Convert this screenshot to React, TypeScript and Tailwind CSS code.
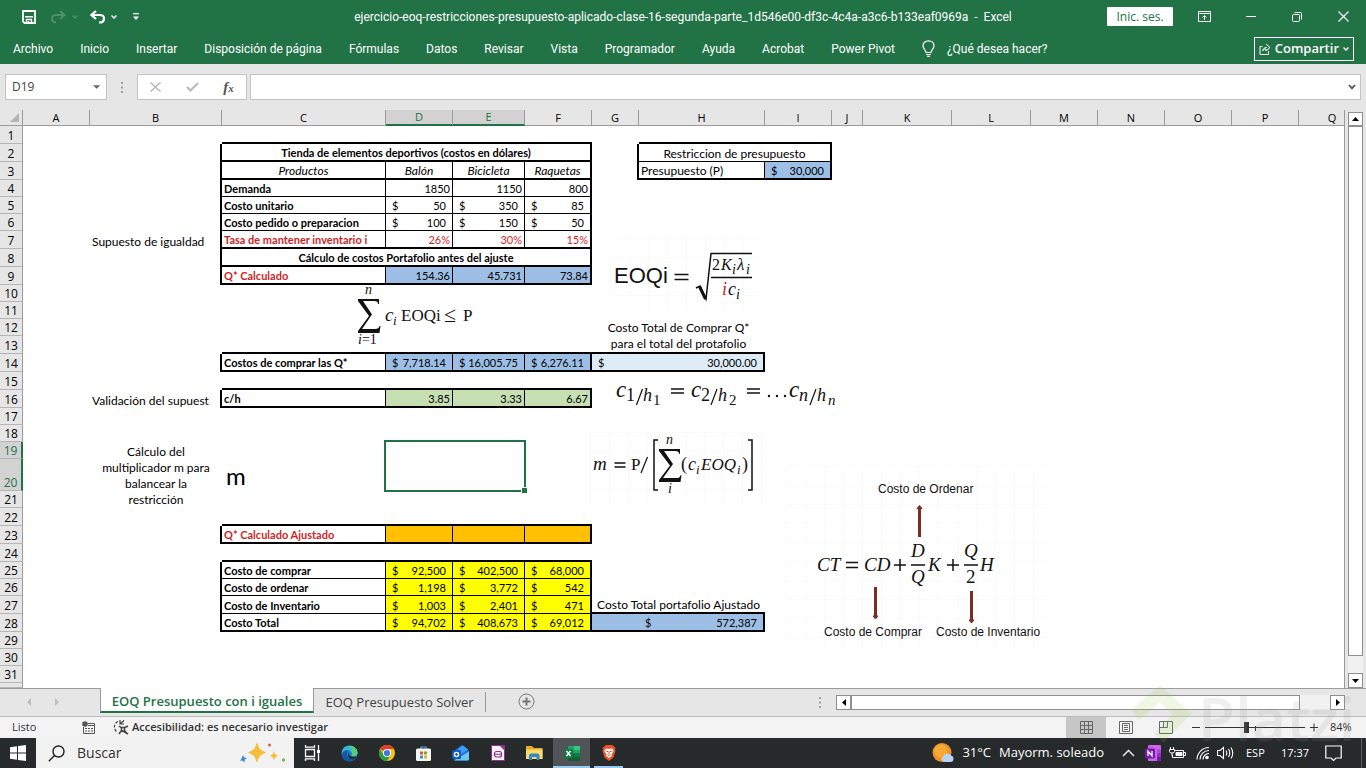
import type { ReactNode } from 'react';

type Cell = {
  text?: ReactNode;
  money?: string;
  cls?: string;
  cols?: number;
  rows?: number;
};

const columns = [
  { name: 'A', width: 'w-[67px]' },
  { name: 'B', width: 'w-[132px]' },
  { name: 'C', width: 'w-[164px]' },
  { name: 'D', width: 'w-[67px]' },
  { name: 'E', width: 'w-[72px]' },
  { name: 'F', width: 'w-[67px]' },
  { name: 'G', width: 'w-[47px]' },
  { name: 'H', width: 'w-[126px]' },
  { name: 'I', width: 'w-[67px]' },
  { name: 'J', width: 'w-[31px]' },
  { name: 'K', width: 'w-[89px]' },
  { name: 'L', width: 'w-[79px]' },
  { name: 'M', width: 'w-[67px]' },
  { name: 'N', width: 'w-[67px]' },
  { name: 'O', width: 'w-[67px]' },
  { name: 'P', width: 'w-[67px]' },
  { name: 'Q', width: 'w-[67px]' },
];

const tallRows = [1, 2, 3, 7, 8, 9, 13, 14, 15, 16, 22, 23, 24, 27, 28];

const blue = 'bg-[#9dbfe6]';
const yellow = 'bg-[#ffff00]';
const orange = 'bg-[#ffc000]';
const green = 'bg-[#c6e0b4]';
const red = 'text-[#d01f27]';

const label = 'font-bold text-[11px] leading-[14px] pl-0.5 border-r border-black';
const title = 'font-bold text-[11px] leading-[14px] text-center border-r-2 border-b-2 border-black';
const product = 'italic text-center border-b-2 border-black';
const num = 'text-right text-[11px] leading-[14px] pr-0.5 border-black';

const cells: Record<string, Cell> = {
  C1: { cls: 'border-b-2 border-black', cols: 4 },
  H1: { cls: 'border-b-2 border-black', cols: 2 },

  B2: { cls: 'border-r-2 border-black' },
  C2: { text: 'Tienda de elementos deportivos (costos en dólares)', cols: 4, cls: title },
  G2: { cls: 'border-r-2 border-black' },
  H2: { text: 'Restriccion de presupuesto', cols: 2, cls: 'text-center border-r-2 border-b border-black' },

  B3: { cls: 'border-r-2 border-black' },
  C3: { text: 'Productos', cls: `${product} border-r` },
  D3: { text: 'Balón', cls: `${product} border-r` },
  E3: { text: 'Bicicleta', cls: `${product} border-r` },
  F3: { text: 'Raquetas', cls: `${product} border-r-2` },
  G3: { cls: 'border-r-2 border-black' },
  H3: { text: 'Presupuesto (P)', cls: 'pl-0.5 border-r border-b-2 border-black' },
  I3: { money: '30,000', cls: `${blue} border-r-2 border-b-2 border-black` },

  B4: { cls: 'border-r-2 border-black' },
  C4: { text: 'Demanda', cls: `${label} border-b` },
  D4: { text: '1850', cls: `${num} border-r border-b` },
  E4: { text: '1150', cls: `${num} border-r border-b` },
  F4: { text: '800', cls: `${num} border-r-2 border-b` },

  B5: { cls: 'border-r-2 border-black' },
  C5: { text: 'Costo unitario', cls: `${label} border-b` },
  D5: { money: '50', cls: 'border-r border-b border-black' },
  E5: { money: '350', cls: 'border-r border-b border-black' },
  F5: { money: '85', cls: 'border-r-2 border-b border-black' },

  B6: { cls: 'border-r-2 border-black' },
  C6: { text: 'Costo pedido o preparacion', cls: `${label} border-b` },
  D6: { money: '100', cls: 'border-r border-b border-black' },
  E6: { money: '150', cls: 'border-r border-b border-black' },
  F6: { money: '50', cls: 'border-r-2 border-b border-black' },

  B7: { text: 'Supuesto de igualdad', cls: 'pl-0.5 border-r-2 border-black' },
  C7: { text: 'Tasa de mantener inventario i', cls: `${label} ${red} border-b-2` },
  D7: { text: '26%', cls: `${num} ${red} border-r border-b-2` },
  E7: { text: '30%', cls: `${num} ${red} border-r border-b-2` },
  F7: { text: '15%', cls: `${num} ${red} border-r-2 border-b-2` },

  B8: { cls: 'border-r-2 border-black' },
  C8: { text: 'Cálculo de costos Portafolio antes del ajuste', cols: 4, cls: title },

  B9: { cls: 'border-r-2 border-black' },
  C9: { text: 'Q* Calculado', cls: `${label} ${red} border-b-2` },
  D9: { text: '154.36', cls: `${num} ${blue} border-r border-b-2` },
  E9: { text: '45.731', cls: `${num} ${blue} border-r border-b-2` },
  F9: { text: '73.84', cls: `${num} ${blue} border-r-2 border-b-2` },

  G12: {
    text: (
      <>
        Costo Total de Comprar Q*
        <br />
        para el total del protafolio
      </>
    ),
    cols: 2,
    rows: 2,
    cls: 'text-center leading-4 border-b-2 border-black',
  },
  C13: { cls: 'border-b-2 border-black', cols: 4 },

  B14: { cls: 'border-r-2 border-black' },
  C14: { text: 'Costos de comprar las Q*', cls: `${label} border-b-2` },
  D14: { money: '7,718.14', cls: `${blue} border-r border-b-2 border-black` },
  E14: { money: '16,005.75', cls: `${blue} border-r border-b-2 border-black` },
  F14: { money: '6,276.11', cls: `${blue} border-r-2 border-b-2 border-black` },
  G14: { money: '30,000.00', cols: 2, cls: 'bg-[#ddebf7] border-r-2 border-b-2 border-black' },

  C15: { cls: 'border-b-2 border-black', cols: 4 },
  B16: { text: 'Validación del supuest', cls: 'pl-0.5 overflow-hidden border-r-2 border-black' },
  C16: { text: 'c/h', cls: `${label} border-b-2` },
  D16: { text: '3.85', cls: `${num} ${green} border-r border-b-2` },
  E16: { text: '3.33', cls: `${num} ${green} border-r border-b-2` },
  F16: { text: '6.67', cls: `${num} ${green} border-r-2 border-b-2` },

  B19: {
    text: (
      <>
        Cálculo del
        <br />
        multiplicador m para
        <br />
        balancear la
        <br />
        restricción
      </>
    ),
    rows: 3,
    cls: 'text-center leading-4',
  },
  C19: { text: 'm', rows: 3, cls: 'pl-1 pb-5 text-2xl leading-6' },
  D19: {
    text: (
      <div className="absolute -top-0.5 -right-px -bottom-px -left-0.5 border-2 border-[#217346]">
        <span className="absolute -right-1 -bottom-1 size-[7px] border border-white bg-[#217346]" />
      </div>
    ),
    cols: 2,
    rows: 2,
    cls: 'relative',
  },

  C22: { cls: 'border-b-2 border-black', cols: 4 },
  B23: { cls: 'border-r-2 border-black' },
  C23: { text: 'Q* Calculado Ajustado', cls: `${label} ${red} border-b-2` },
  D23: { cls: `${orange} border-r border-b-2 border-black` },
  E23: { cls: `${orange} border-r border-b-2 border-black` },
  F23: { cls: `${orange} border-r-2 border-b-2 border-black` },

  C24: { cls: 'border-b-2 border-black', cols: 4 },
  B25: { cls: 'border-r-2 border-black' },
  C25: { text: 'Costo de comprar', cls: `${label} border-b` },
  D25: { money: '92,500', cls: `${yellow} border-r border-b border-black` },
  E25: { money: '402,500', cls: `${yellow} border-r border-b border-black` },
  F25: { money: '68,000', cls: `${yellow} border-r-2 border-b border-black` },

  B26: { cls: 'border-r-2 border-black' },
  C26: { text: 'Costo de ordenar', cls: `${label} border-b` },
  D26: { money: '1,198', cls: `${yellow} border-r border-b border-black` },
  E26: { money: '3,772', cls: `${yellow} border-r border-b border-black` },
  F26: { money: '542', cls: `${yellow} border-r-2 border-b border-black` },

  B27: { cls: 'border-r-2 border-black' },
  C27: { text: 'Costo de Inventario', cls: `${label} border-b` },
  D27: { money: '1,003', cls: `${yellow} border-r border-b border-black` },
  E27: { money: '2,401', cls: `${yellow} border-r border-b border-black` },
  F27: { money: '471', cls: `${yellow} border-r-2 border-b border-black` },
  G27: { text: 'Costo Total portafolio Ajustado', cols: 2, cls: 'text-center border-b-2 border-black' },

  B28: { cls: 'border-r-2 border-black' },
  C28: { text: 'Costo Total', cls: `${label} border-b-2` },
  D28: { money: '94,702', cls: `${yellow} border-r border-b-2 border-black` },
  E28: { money: '408,673', cls: `${yellow} border-r border-b-2 border-black` },
  F28: { money: '69,012', cls: `${yellow} border-r-2 border-b-2 border-black` },
  G28: { cls: `${blue} border-b-2 border-black` },
  H28: { money: '572,387', cls: `${blue} border-r-2 border-b-2 border-black` },
};

// cells hidden behind a merged range
const covered = new Set<string>();
Object.entries(cells).forEach(([key, cell]) => {
  const col = columns.findIndex((c) => c.name === key[0]);
  const row = Number(key.slice(1));
  for (let r = 0; r < (cell.rows ?? 1); r++) {
    for (let c = 0; c < (cell.cols ?? 1); c++) {
      if (r || c) covered.add(`${columns[col + c].name}${row + r}`);
    }
  }
});

function rowHeight(n: number) {
  if (n === 20) return 'h-8';
  if (n === 32) return 'h-[5px]';
  return tallRows.includes(n) ? 'h-[18px]' : 'h-[17px]';
}

const serif = "'Liberation Serif', serif";

function Sigma({ x, y, h }: { x: number; y: number; h: number }) {
  return (
    <path
      transform={`translate(${x} ${y}) scale(1 ${h / 34})`}
      d="M0 0H21V5H20C20 3 19 2 16 2H5L14 15.500L4 30H17C20 30 21 29 21.500 27H22.500L21.500 34H0V32L11 17L0 2Z"
      fill="#111"
    />
  );
}

function PaperGrid({ id, w, h }: { id: string; w: number; h: number }) {
  return (
    <>
      <defs>
        <pattern id={id} width="19" height="19" patternUnits="userSpaceOnUse">
          <path d="M0.500 0V19M0 0.500H19" stroke="#fafafa" />
        </pattern>
      </defs>
      <rect width={w} height={h} fill={`url(#${id})`} />
    </>
  );
}

function SumFormula() {
  return (
    <svg className="absolute top-[174px] left-[352px]" width="130" height="64" fontFamily={serif} fill="#111">
      <text x="13" y="10" fontSize="14" fontStyle="italic">n</text>
      <Sigma x={6} y={15} h={34} />
      <text x="6" y="60" fontSize="14"><tspan fontStyle="italic">i</tspan>=1</text>
      <text x="33" y="37" fontSize="19" fontStyle="italic">c</text>
      <text x="41" y="41" fontSize="13" fontStyle="italic">i</text>
      <text x="49" y="37" fontSize="17">EOQi</text>
      <text x="92" y="38" fontSize="22">≤</text>
      <text x="111" y="37" fontSize="17">P</text>
    </svg>
  );
}

function EoqFormula() {
  return (
    <svg className="absolute top-[128px] left-[610px]" width="152" height="72" fontFamily={serif} fill="#111">
      <PaperGrid id="grid-eoq" w={152} h={72} />
      <text x="4" y="45" fontSize="22" fontFamily="'Liberation Sans', sans-serif">EOQi</text>
      <path d="M64.500 36.500H78.500M64.500 41.500H78.500" stroke="#111" strokeWidth="1.500" />
      <path d="M86 50L90 48L96 61L101 15.500H142" fill="none" stroke="#111" strokeWidth="1.500" />
      <path d="M89.500 48.500L95.500 61" stroke="#111" strokeWidth="3" />
      <text x="102" y="32" fontSize="16">2</text>
      <text x="111" y="32" fontSize="16" fontStyle="italic">K</text>
      <text x="122" y="36" fontSize="14" fontStyle="italic">i</text>
      <text x="127" y="32" fontSize="17" fontStyle="italic">λ</text>
      <text x="136" y="36" fontSize="14" fontStyle="italic">i</text>
      <path d="M101 39.500H142" stroke="#111" strokeWidth="1.500" />
      <text x="112" y="57" fontSize="18" fontStyle="italic" fill="#cf1f26">i</text>
      <text x="118" y="57" fontSize="18" fontStyle="italic">c</text>
      <text x="126" y="61" fontSize="14" fontStyle="italic">i</text>
    </svg>
  );
}

function RatioFormula() {
  return (
    <svg className="absolute top-[268px] left-[612px]" width="230" height="34" fontFamily={serif} fill="#111">
      <g fontSize="23" fontStyle="italic">
        <text x="4" y="19">c</text>
        <text x="79" y="19">c</text>
        <text x="177" y="19">c</text>
      </g>
      <g fontSize="18">
        <text x="14" y="23">1</text>
        <text x="89" y="23">2</text>
        <text x="187" y="23" fontStyle="italic">n</text>
        <text x="31" y="23" fontStyle="italic">h</text>
        <text x="106" y="23" fontStyle="italic">h</text>
        <text x="205" y="23" fontStyle="italic">h</text>
      </g>
      <g fontSize="15">
        <text x="41" y="27">1</text>
        <text x="117" y="27">2</text>
        <text x="216" y="27" fontStyle="italic">n</text>
      </g>
      <path d="M24.500 27L30.500 11M99 27L105 11M198 27L204 11" stroke="#111" strokeWidth="1.200" />
      <path d="M59 11H72M59 15H72M135 11H148M135 15H148" stroke="#111" strokeWidth="1.300" />
      <g>
        <circle cx="157" cy="18" r="1.200" />
        <circle cx="165" cy="18" r="1.200" />
        <circle cx="173" cy="18" r="1.200" />
      </g>
    </svg>
  );
}

function MultiplierFormula() {
  return (
    <svg className="absolute top-[322px] left-[590px]" width="174" height="72" fontFamily={serif} fill="#111">
      <PaperGrid id="grid-m" w={174} h={72} />
      <text x="3" y="38" fontSize="19" fontStyle="italic">m</text>
      <path d="M24.500 31H35.500M24.500 35H35.500" stroke="#111" strokeWidth="1.300" />
      <text x="41" y="38" fontSize="17">P</text>
      <path d="M51 41L57.500 25" stroke="#111" strokeWidth="1.200" />
      <path d="M68 8H64V58H68M158 8H162V58H158" fill="none" stroke="#111" strokeWidth="1.500" />
      <text x="76" y="12" fontSize="14" fontStyle="italic">n</text>
      <Sigma x={69} y={17} h={33} />
      <text x="78" y="61" fontSize="14" fontStyle="italic">i</text>
      <text x="91" y="38" fontSize="18">(</text>
      <text x="98" y="38" fontSize="18" fontStyle="italic">c</text>
      <text x="106" y="42" fontSize="13" fontStyle="italic">i</text>
      <text x="111" y="38" fontSize="17" fontStyle="italic">EOQ</text>
      <text x="147" y="42" fontSize="13" fontStyle="italic">i</text>
      <text x="152" y="38" fontSize="18">)</text>
    </svg>
  );
}

function TotalCostFormula() {
  return (
    <svg className="absolute top-[356px] left-[786px]" width="262" height="182" fontFamily={serif} fill="#111">
      <PaperGrid id="grid-ct" w={262} h={182} />
      <g fontFamily="'Liberation Sans', sans-serif" fontSize="12">
        <text x="92" y="27">Costo de Ordenar</text>
        <text x="38" y="170">Costo de Comprar</text>
        <text x="150" y="170">Costo de Inventario</text>
      </g>
      <g fontSize="19" fontStyle="italic">
        <text x="31" y="105">CT</text>
        <text x="78" y="105">CD</text>
        <text x="125" y="91">D</text>
        <text x="125" y="117">Q</text>
        <text x="142" y="105">K</text>
        <text x="178" y="91">Q</text>
        <text x="194" y="105">H</text>
        <text x="180" y="117" fontStyle="normal">2</text>
      </g>
      <path
        d="M60 96.500H72M60 101.500H72M108 99H120M114 93V105M161 99H173M167 93V105M125 99H139M178 99H192"
        stroke="#111"
        strokeWidth="1.500"
      />
      <path d="M133.500 71V42M89.500 121V150M185.500 125V154" stroke="#7e2c1f" strokeWidth="3" />
      <path
        d="M131 42.500L133.500 39.500L136 42.500ZM87 150L89.500 153L92 150ZM183 154L185.500 157L188 154Z"
        fill="#7e2c1f"
        stroke="#7e2c1f"
      />
    </svg>
  );
}

function TitleBar() {
  return (
    <header className="bg-[#217346] font-['Roboto',sans-serif] text-white">
      <div className="flex h-[33px] items-center">
        <div className="flex w-[340px] items-center pl-[22px]">
          <button aria-label="Guardar">
            <svg width="14" height="14" viewBox="0 0 14 14" fill="none" stroke="white" strokeWidth="1.800">
              <path d="M1 1H13V13H2.500L1 11.500Z" />
              <path d="M3 6.800H11M4.500 13V9.500H9.500V13M6.500 11V13" strokeWidth="1.400" />
            </svg>
          </button>
          <button aria-label="Rehacer" className="ml-[15px] flex items-center gap-1.5 text-[#4c9168]">
            <svg width="15" height="14" viewBox="0 0 15 14" fill="none" stroke="currentColor" strokeWidth="2">
              <path d="M9 1L13.500 5L9 9M13 5H5.500C2.500 5 1 6.500 1 8.500C1 11 2.500 12.500 5 12.500" />
            </svg>
            <Chevron />
          </button>
          <button aria-label="Deshacer" className="ml-3 flex items-center gap-1.5">
            <svg width="15" height="14" viewBox="0 0 15 14" fill="none" stroke="currentColor" strokeWidth="2.200">
              <path d="M6 1L1.500 5L6 9M2 5H9.500C12.500 5 14 6.500 14 8.500C14 11 12.500 12.500 9 12.500" />
            </svg>
            <Chevron />
          </button>
          <button aria-label="Personalizar barra de acceso rápido" className="ml-4">
            <svg width="6" height="8" viewBox="0 0 6 8" fill="white">
              <path d="M0 0H6V1.300H0ZM0 3.500H6L3 7Z" />
            </svg>
          </button>
        </div>
        <h1 className="flex-1 text-center text-xs whitespace-pre">
          ejercicio-eoq-restricciones-presupuesto-aplicado-clase-16-segunda-parte_1d546e00-df3c-4c4a-a3c6-b133eaf0969a  -  Excel
        </h1>
        <div className="flex w-[340px] items-center justify-end pr-[17px]">
          <button className="mr-[25px] h-[19px] w-[66px] rounded-[1px] bg-white font-['Open_Sans',sans-serif] text-xs leading-4 text-[#217346]">Inic. ses.</button>
          <button aria-label="Opciones de presentación de la cinta" className="mr-[35px]">
            <svg width="13" height="11" viewBox="0 0 13 11" fill="none" stroke="white">
              <path d="M0.500 0.500H12.500V10.500H0.500ZM0.500 2.500H12.500M6.500 9V4.500M4.500 6.500L6.500 4.500L8.500 6.500" />
            </svg>
          </button>
          <button aria-label="Minimizar" className="mr-9">
            <svg width="10" height="11" viewBox="0 0 10 11" stroke="white"><path d="M0 5.500H10" /></svg>
          </button>
          <button aria-label="Restaurar" className="mr-9">
            <svg width="10" height="10" viewBox="0 0 10 10" fill="none" stroke="white">
              <rect x="0.500" y="2.500" width="7" height="7" rx="1" />
              <path d="M2.500 0.500H8.500Q9.500 0.500 9.500 1.500V7.500" />
            </svg>
          </button>
          <button aria-label="Cerrar">
            <svg width="11" height="11" viewBox="0 0 11 11" stroke="white" strokeWidth="1.200"><path d="M0.500 0.500L10.500 10.500M10.500 0.500L0.500 10.500" /></svg>
          </button>
        </div>
      </div>
      <nav className="flex h-[31px] items-center gap-[27px] pr-3 pl-[13px] text-xs">
        {['Archivo', 'Inicio', 'Insertar', 'Disposición de página', 'Fórmulas', 'Datos', 'Revisar', 'Vista', 'Programador', 'Ayuda', 'Acrobat', 'Power Pivot'].map((tab) => (
          <button key={tab} className="whitespace-nowrap">{tab}</button>
        ))}
        <button className="flex items-center gap-3 whitespace-nowrap">
          <svg width="13" height="17" viewBox="0 0 13 17" fill="none" stroke="white" strokeWidth="1.200">
            <path d="M4 12.500C4 10 1 9 1 5.800C1 3 3.300 0.800 6.500 0.800S12 3 12 5.800C12 9 9 10 9 12.500ZM4 14.500H9M5 16.300H8" />
          </svg>
          ¿Qué desea hacer?
        </button>
        <button className="ml-auto flex h-6 items-center gap-1 border border-white px-1 font-['Open_Sans',sans-serif] text-[13px] font-semibold">
          <svg width="12" height="12" viewBox="0 0 12 12" fill="none" stroke="white">
            <path d="M3.500 3.500H1V11.500H9.500V8M3.500 8C4 5.500 5.500 4.500 8 4.500M7 1L11 4.500L7 8V6C5 6 4 7 3.500 8" />
          </svg>
          Compartir
          <Chevron />
        </button>
      </nav>
    </header>
  );
}

function Chevron() {
  return (
    <svg width="6" height="6" viewBox="0 0 6 6" fill="none" stroke="currentColor" strokeWidth="1.400">
      <path d="M0.500 1.500L3 4L5.500 1.500" />
    </svg>
  );
}

function Dots() {
  return (
    <svg width="2" height="11" viewBox="0 0 2 11" fill="#a0a0a0">
      <path d="M0 0H2V2H0ZM0 4.500H2V6.500H0ZM0 9H2V11H0Z" />
    </svg>
  );
}

function FormulaBar() {
  return (
    <div className="flex h-[46px] items-start bg-[#e6e6e6] pt-[10px] pr-[5px] pl-[5px]">
      <div className="flex h-[26px] w-[102px] items-center border border-[#c3c3c3] bg-white pr-1.5 pl-1.5">
        <input aria-label="Cuadro de nombres" defaultValue="D19" className="w-full min-w-0 text-xs text-[#444] outline-none" />
        <svg width="8" height="4" viewBox="0 0 8 4" fill="#666"><path d="M0 0H8L4 4Z" /></svg>
      </div>
      <div className="flex h-[26px] w-[30px] items-center justify-center"><Dots /></div>
      <div className="flex h-[26px] w-[110px] items-center justify-around border border-[#c3c3c3] bg-white">
        <button aria-label="Cancelar">
          <svg width="11" height="10" viewBox="0 0 11 10" stroke="#b9b9b9" strokeWidth="1.500"><path d="M0.500 0.500L10.500 9.500M10.500 0.500L0.500 9.500" /></svg>
        </button>
        <button aria-label="Introducir">
          <svg width="13" height="10" viewBox="0 0 13 10" fill="none" stroke="#b9b9b9" strokeWidth="2"><path d="M1 5L4.500 8.500L12 1" /></svg>
        </button>
        <button aria-label="Insertar función" className="font-['Liberation_Serif',serif] text-[15px] leading-4 font-bold text-[#555] italic">
          f<sub className="bottom-0 text-[11px]">x</sub>
        </button>
      </div>
      <div className="ml-[3px] flex h-[26px] flex-1 items-center border border-[#c3c3c3] bg-white pr-1">
        <input aria-label="Barra de fórmulas" className="h-full min-w-0 flex-1 px-1 text-xs outline-none" />
        <svg width="8" height="6" viewBox="0 0 8 6" fill="none" stroke="#555" strokeWidth="1.800"><path d="M1 1L4 4.300L7 1" /></svg>
      </div>
    </div>
  );
}

function Sheet() {
  return (
    <div className="flex min-h-0 flex-1 bg-[#e6e6e6]">
      <div className="relative min-w-0 flex-1 overflow-hidden border-r border-[#9b9b9b] bg-white">
        <table className="w-[1366px] table-fixed border-separate border-spacing-0 font-['Lato',sans-serif] text-xs leading-[14px] text-black">
          <thead className="font-['Open_Sans',sans-serif]">
            <tr className="h-4">
              <th className="w-[23px] border-r border-b border-[#9b9b9b] bg-[#e6e6e6] p-0" aria-label="Seleccionar todo">
                <svg className="ml-auto mr-[3px]" width="9" height="9" viewBox="0 0 9 9" fill="#b4b4b4"><path d="M9 0V9H0Z" /></svg>
              </th>
              {columns.map((c) => (
                <th
                  key={c.name}
                  className={`${c.width} p-0 text-[11px] leading-[14px] font-normal ${
                    c.name === 'D' || c.name === 'E'
                      ? 'border-r border-b-2 border-r-[#9b9b9b] border-b-[#217346] bg-[#d2d2d2] text-[#217346]'
                      : 'border-r border-b border-[#9b9b9b] bg-[#e6e6e6]'
                  }`}
                >
                  {c.name}
                </th>
              ))}
            </tr>
          </thead>
          <tbody>
            {Array.from({ length: 32 }, (_, i) => i + 1).map((n) => (
              <tr key={n} className={rowHeight(n)}>
                <th
                  className={`p-0 text-center align-bottom font-['Open_Sans',sans-serif] font-normal ${
                    n === 19 || n === 20
                      ? 'border-r-2 border-b border-r-[#217346] border-b-[#b5b5b5] bg-[#d2d2d2] text-[#217346]'
                      : 'border-r border-b border-r-[#9b9b9b] border-b-[#b5b5b5] bg-[#e6e6e6]'
                  }`}
                >
                  {n < 32 && n}
                </th>
                {columns.map((c) => {
                  const key = `${c.name}${n}`;
                  if (covered.has(key)) return null;
                  const cell = cells[key];
                  return (
                    <td key={key} colSpan={cell?.cols} rowSpan={cell?.rows} className={`p-0 align-bottom whitespace-nowrap ${cell?.cls ?? ''}`}>
                      {cell?.money ? (
                        <div className="flex justify-between px-1.5 text-[11px] leading-[14px]">
                          <span>$</span>
                          <span>{cell.money}</span>
                        </div>
                      ) : (
                        cell?.text
                      )}
                    </td>
                  );
                })}
              </tr>
            ))}
          </tbody>
        </table>
        <SumFormula />
        <EoqFormula />
        <RatioFormula />
        <MultiplierFormula />
        <TotalCostFormula />
      </div>
      <div className="flex w-[21px] flex-col pt-0.5 pl-[3px]">
        <button aria-label="Subir" className="flex h-[14px] w-[15px] items-center justify-center border border-[#8f8f8f] bg-white">
          <svg width="7" height="4" viewBox="0 0 7 4"><path d="M0 4H7L3.500 0Z" /></svg>
        </button>
        <div className="w-[15px] flex-1 bg-[#f1f1f1] pb-[17px]">
          <div className="h-full border border-[#8f8f8f] bg-white" />
        </div>
        <button aria-label="Bajar" className="flex h-[15px] w-[15px] items-center justify-center border border-[#8f8f8f] bg-white">
          <svg width="7" height="4" viewBox="0 0 7 4"><path d="M0 0H7L3.500 4Z" /></svg>
        </button>
      </div>
    </div>
  );
}

function SheetTabs() {
  return (
    <div className="flex h-[28px] items-start border-t border-[#9b9b9b] bg-[#e6e6e6]">
      <div className="flex h-[26px] w-[100px] items-center gap-[24px] pl-[27px]">
        <svg width="4" height="8" viewBox="0 0 4 8" fill="#bdbdbd"><path d="M4 0V8L0 4Z" /></svg>
        <svg width="4" height="8" viewBox="0 0 4 8" fill="#bdbdbd"><path d="M0 0V8L4 4Z" /></svg>
      </div>
      <button className="-mt-px h-[25px] w-[214px] border-x border-b-2 border-x-[#9b9b9b] border-b-[#217346] bg-white pt-[3px] text-[13px] leading-5 font-semibold whitespace-nowrap text-[#217346]">
        EOQ Presupuesto con i iguales
      </button>
      <button className="mt-[3px] h-5 w-[172px] border-r border-[#9b9b9b] text-[13px] leading-[18px] whitespace-nowrap text-[#444]">EOQ Presupuesto Solver</button>
      <button aria-label="Hoja nueva" className="mt-1 ml-8">
        <svg width="17" height="17" viewBox="0 0 17 17" fill="none" stroke="#777">
          <circle cx="8.500" cy="8.500" r="7.500" />
          <path d="M8.500 4.500V12.500M4.500 8.500H12.500" strokeWidth="2" />
        </svg>
      </button>
      <div className="mt-2 mr-[15px] ml-auto"><Dots /></div>
      <div className="mt-1.5 mr-[21px] flex h-[15px] w-[38%] max-w-[509px] items-stretch bg-[#f1f1f1]">
        <button aria-label="Desplazar a la izquierda" className="flex w-[15px] items-center justify-center border border-[#8f8f8f] bg-white">
          <svg width="4" height="7" viewBox="0 0 4 7"><path d="M4 0V7L0 3.500Z" /></svg>
        </button>
        <div className="mr-[30px] flex-1 border border-[#8f8f8f] bg-white" />
        <button aria-label="Desplazar a la derecha" className="flex w-[15px] items-center justify-center border border-[#8f8f8f] bg-white">
          <svg width="4" height="7" viewBox="0 0 4 7"><path d="M0 0V7L4 3.500Z" /></svg>
        </button>
      </div>
    </div>
  );
}

function StatusBar() {
  return (
    <div className="flex h-[22px] items-center border-t border-[#bdbdbd] bg-[#f3f3f3] text-[11px] text-[#333]">
      <span className="w-[82px] pl-3">Listo</span>
      <svg width="13" height="13" viewBox="0 0 13 13" fill="none" stroke="#555">
        <path d="M6 2.500H12.500V12.500H1.500V6M6 4.500H12" />
        <path d="M3 7.500H5M6 7.500H8M9 7.500H11M3 10H5M6 10H8M9 10H11" />
        <circle cx="3" cy="3" r="2.800" fill="#555" stroke="none" />
      </svg>
      <button className="ml-[18px] flex items-center gap-[3px] font-semibold whitespace-nowrap text-[#333]">
        <svg width="16" height="15" viewBox="0 0 16 15" fill="none" stroke="#444" strokeWidth="1.200">
          <path d="M5 1.500A6 6 0 0 0 4 12" strokeDasharray="3 1.500" />
          <path d="M6 6L8 7.500H12L15 6M8.500 8V10.500L6 14M11.500 8V10.500L14.500 14M8 10L15 14" strokeWidth="1.500" />
          <path d="M7 0V4H11M7 4L11 0.500" />
        </svg>
        Accesibilidad: es necesario investigar
      </button>
      <div className="ml-auto flex h-full items-center pr-[13px]">
        <button aria-label="Normal" className="flex h-full w-10 items-center justify-center bg-[#c6c6c6]">
          <svg width="13" height="13" viewBox="0 0 13 13" fill="none" stroke="#666"><path d="M0.500 0.500H12.500V12.500H0.500ZM4.500 0.500V12.500M8.500 0.500V12.500M0.500 4.500H12.500M0.500 8.500H12.500" /></svg>
        </button>
        <button aria-label="Diseño de página" className="flex h-full w-10 items-center justify-center">
          <svg width="14" height="13" viewBox="0 0 14 13" fill="none" stroke="#666"><path d="M0.500 0.500H13.500V12.500H0.500ZM3.500 2.500H10.500V10.500H3.500ZM5 4.500H9M5 6.500H9M5 8.500H9" /></svg>
        </button>
        <button aria-label="Vista previa de salto de página" className="flex h-full w-10 items-center justify-center">
          <svg width="14" height="13" viewBox="0 0 14 13" fill="none" stroke="#666"><path d="M0.500 0.500H13.500V12.500H0.500ZM4.500 0.500V6.500M8.500 0.500V6.500M0.500 6.500H8.500" /></svg>
        </button>
        <button aria-label="Alejar" className="ml-1.5">
          <svg width="8" height="9" viewBox="0 0 8 9" stroke="#333"><path d="M0 4.500H8" /></svg>
        </button>
        <div className="relative mx-[5px] flex h-3 w-[100px] items-center">
          <span className="absolute top-1 left-1/2 h-[5px] w-px bg-[#333]" />
          <input
            type="range"
            aria-label="Zoom"
            min={0}
            max={100}
            defaultValue={41}
            className="h-px w-full appearance-none bg-[#333] [&::-webkit-slider-thumb]:h-[11px] [&::-webkit-slider-thumb]:w-[5px] [&::-webkit-slider-thumb]:appearance-none [&::-webkit-slider-thumb]:bg-[#333]"
          />
        </div>
        <button aria-label="Acercar">
          <svg width="8" height="9" viewBox="0 0 8 9" stroke="#333"><path d="M0 4.500H8M4 0.500V8.500" /></svg>
        </button>
        <span className="ml-3 w-[23px] whitespace-nowrap">84%</span>
      </div>
    </div>
  );
}

function TaskIcon({ name, children, active, open }: { name: string; children: ReactNode; active?: boolean; open?: boolean }) {
  return (
    <button aria-label={name} className={`relative flex h-full w-[37px] items-center justify-center ${active ? 'bg-[#505456]' : ''}`}>
      {children}
      {active && <span className="absolute inset-x-0 bottom-0 h-0.5 bg-[#9ccbf0]" />}
      {open && <span className="absolute inset-x-1 bottom-0 h-0.5 bg-[#9ccbf0]" />}
    </button>
  );
}

function TaskBar() {
  return (
    <footer className="flex h-[30px] items-center bg-[#262a2b] text-[13px] text-white">
      <button aria-label="Inicio" className="flex h-full w-9 items-center justify-center">
        <svg width="16" height="16" viewBox="0 0 16 16" fill="white"><path d="M0 2.300L7 1.300V7.600H0ZM8 1.100L16 0V7.600H8ZM0 8.500H7V14.800L0 13.800ZM8 8.500H16V16L8 15Z" /></svg>
      </button>
      <label className="flex h-full w-[258px] items-center bg-[#f2f2f2] pr-2 pl-3">
        <svg width="17" height="17" viewBox="0 0 17 17" fill="none" stroke="#222" strokeWidth="1.400"><circle cx="10.500" cy="6.500" r="5.500" /><path d="M6.500 10.500L0.800 16.200" /></svg>
        <input aria-label="Buscar" placeholder="Buscar" className="ml-3 min-w-0 flex-1 text-sm outline-none placeholder:text-[#333]" />
        <svg width="46" height="20" viewBox="0 0 46 20">
          <path d="M17 0.500C18.800 6 20 7.500 25.500 9.500C20 11.500 18.800 13 17 18.500C15.200 13 14 11.500 8.500 9.500C14 7.500 15.200 6 17 0.500Z" fill="#f5bd3a" stroke="#f5bd3a" strokeLinejoin="round" />
          <path d="M34 8C34.800 11 35.500 12 38.500 12.700C35.500 13.500 34.800 14.500 34 17.500C33.200 14.500 32.500 13.500 29.500 12.700C32.500 12 33.200 11 34 8Z" fill="#f5bd3a" />
          <path d="M3 12L4.200 14.500L7 15L4.800 16.500L4.500 19.500L2.500 17.500L0 17.800L1.500 15.500Z" fill="#2f8fd8" />
          <circle cx="29.500" cy="2" r="1.500" fill="#d9603b" />
          <circle cx="43.500" cy="17" r="1.700" fill="#78b450" />
        </svg>
      </label>
      <div className="flex h-full">
        <TaskIcon name="Vista de tareas">
          <svg width="17" height="16" viewBox="0 0 17 16" fill="none" stroke="white" strokeWidth="1.300"><path d="M1.500 4.500H10.500V11.500H1.500ZM1.500 0V2.200H10.500V0M1.500 16V13.800H10.500V16M14.500 0V5M14.500 8V16" /><rect x="13" y="5" width="3" height="3" fill="white" stroke="none" /></svg>
        </TaskIcon>
        <TaskIcon name="Edge">
          <svg width="17" height="17" viewBox="0 0 17 17">
            <circle cx="8.500" cy="8.500" r="8" fill="#1976c8" />
            <path d="M1 6C3 -1 14 -1 16.500 7C17 11 13 12 10.500 10.800C12 8 9 5 6 5C4 5 2 6 0.600 8.500Z" fill="#35b9d2" />
            <path d="M9 0.600C14 1.500 17 5 16.500 8.500C15.500 11.500 12 11.500 10.500 10.500C12 8 11 5.500 9 0.600Z" fill="#5ccb72" />
            <path d="M6 8C5 11 7 15 13 14.500C10 17.500 4 17 1.500 12C0.500 9 3 5.500 7 5.500C6.500 6 6.200 7 6 8Z" fill="#15559f" />
            <path d="M8 8C7.500 10.500 9.500 13 15.500 11.500C15 13 14 14 13 14.500C8 15 5.500 11 8 8Z" fill="#262a2b" />
          </svg>
        </TaskIcon>
        <TaskIcon name="Chrome">
          <svg width="16" height="16" viewBox="0 0 16 16">
            <circle cx="8" cy="8" r="8" fill="#fbc116" />
            <path d="M8 8L1.070 4A8 8 0 0 1 14.930 4H8Z" fill="#e33b2e" />
            <path d="M8 8L4.540 10L1.070 4A8 8 0 0 0 8 16L11.460 10Z" fill="#299c46" />
            <circle cx="8" cy="8" r="4" fill="white" />
            <circle cx="8" cy="8" r="3.100" fill="#3b78e7" />
          </svg>
        </TaskIcon>
        <TaskIcon name="Microsoft Store">
          <svg width="15" height="15" viewBox="0 0 15 15">
            <path d="M5 3V1H10V3" fill="none" stroke="#4aa8e0" strokeWidth="1.200" />
            <rect y="2.500" width="15" height="12.500" rx="1.500" fill="#f5f5f5" />
            <path d="M4 5.500H7V8.500H4Z" fill="#e5532d" /><path d="M8 5.500H11V8.500H8Z" fill="#6fae2b" />
            <path d="M4 9.500H7V12.500H4Z" fill="#2f93d6" /><path d="M8 9.500H11V12.500H8Z" fill="#f0b323" />
          </svg>
        </TaskIcon>
        <TaskIcon name="Outlook">
          <svg width="17" height="16" viewBox="0 0 17 16">
            <path d="M2 6L9 0.500Q10 0 11 0.500L16 4.500Q17 5.500 17 7V14Q17 15.500 15.500 15.500H4Q2 15.500 2 14Z" fill="#1f6fe0" />
            <path d="M6 4L11 0.500L16 4.500L8 10Z" fill="#3f9cf2" />
            <path d="M2 15.500L17 6.500V14Q17 15.500 15.500 15.500Z" fill="#6cc7f7" />
            <rect y="5" width="9" height="9" rx="1.500" fill="#1059b8" />
            <circle cx="4.500" cy="9.500" r="2.100" fill="none" stroke="white" strokeWidth="1.400" />
          </svg>
        </TaskIcon>
        <TaskIcon name="Archivo">
          <svg width="14" height="16" viewBox="0 0 14 16">
            <path d="M0.500 0.500H13.500V15.500H0.500Z" fill="#f7f1f8" stroke="#8d2f90" />
            <path d="M8.500 0.500H13.500V5.500Z" fill="#8d2f90" />
            <rect x="3.500" y="6.500" width="7" height="5.500" rx="2" fill="none" stroke="#8d2f90" strokeWidth="1.200" />
            <path d="M4 9.200H10" stroke="#8d2f90" />
          </svg>
        </TaskIcon>
        <TaskIcon name="Explorador de archivos">
          <svg width="17" height="14" viewBox="0 0 17 14">
            <path d="M0 0H6L8 2H16.500V13H0Z" fill="#e9a928" /><path d="M0 3.500H16.500V13H0Z" fill="#fbd96c" />
            <path d="M3 14V9.500Q3 7.500 5 7.500H11.500Q13.500 7.500 13.500 9.500V14H10.500V11H6V14Z" fill="#2f8ac6" />
          </svg>
        </TaskIcon>
        <TaskIcon name="Excel" active>
          <svg width="16" height="15" viewBox="0 0 16 15">
            <rect x="4" width="12" height="15" rx="1" fill="#21a366" /><path d="M10 0H16V4H10Z" fill="#33c481" />
            <path d="M4 7.500H16V15H4Z" fill="#185c37" /><path d="M10 7.500H16V11H10Z" fill="#107c41" />
            <rect y="3" width="9" height="9" rx="1" fill="#107c41" />
            <path d="M2.500 5L6.500 10M6.500 5L2.500 10" stroke="white" strokeWidth="1.400" />
          </svg>
        </TaskIcon>
        <TaskIcon name="Brave" open>
          <svg width="14" height="16" viewBox="0 0 14 16">
            <path d="M3.500 0H10.500L12 1.800L13.500 2.500L13 4.500L13.500 6L11.500 12.500L7 16L2.500 12.500L0.500 6L1 4.500L0.500 2.500L2 1.800Z" fill="#f04e23" />
            <path d="M3 4L5.500 3.500L7 4L8.500 3.500L11 4L11.500 6.500L9.500 9.500L9.800 11L7 13L4.200 11L4.500 9.500L2.500 6.500Z" fill="white" />
            <path d="M4 6L6 6.700M10 6L8 6.700M7 6V9M5.500 9.500L7 10.500L8.500 9.500" stroke="#f04e23" fill="none" />
          </svg>
        </TaskIcon>
      </div>
      <div className="ml-auto flex h-full items-center whitespace-nowrap">
        <button className="flex items-center gap-2">
          <svg width="22" height="20" viewBox="0 0 22 20">
            <circle cx="10" cy="9.500" r="9.500" fill="#f0932a" /><circle cx="9" cy="8" r="6.500" fill="#f7aa35" />
            <path d="M12 19A3 3 0 0 1 11.500 13.200A4.200 4.200 0 0 1 19 12.500A3.300 3.300 0 0 1 18.500 19Z" fill="#b8d4f5" />
          </svg>
          <span>31°C</span>
          <span>Mayorm. soleado</span>
        </button>
        <button aria-label="Mostrar iconos ocultos" className="ml-[18px]">
          <svg width="13" height="8" viewBox="0 0 13 8" fill="none" stroke="white" strokeWidth="1.300"><path d="M1 7L6.500 1.500L12 7" /></svg>
        </button>
        <svg className="ml-2.5" width="16" height="16" viewBox="0 0 16 16">
          <rect x="3" width="13" height="16" rx="1" fill="#ca64ea" /><path d="M12 4H16V8H12Z" fill="#ae4bd5" /><path d="M12 8H16V12H12Z" fill="#9332bf" /><path d="M12 12H16V15Q16 16 15 16H12Z" fill="#7719aa" />
          <rect y="3.500" width="10" height="10" rx="1" fill="#7719aa" /><path d="M3 11V6L7 11V6" fill="none" stroke="white" strokeWidth="1.300" />
        </svg>
        <svg className="ml-2" width="17" height="12" viewBox="0 0 17 12" fill="none" stroke="white">
          <path d="M5 3.500H14.500V10.500H3.500V8M14.500 5.500H16.500V8.500H14.500M0.500 2.500H5.500V4.500Q5.500 6 3 6Q0.500 6 0.500 4.500ZM1.500 0V2M4.500 0V2M3 6V9" />
          <path d="M7 5.500H13V8.500H7Z" fill="white" />
        </svg>
        <svg className="ml-[10px]" width="14" height="14" viewBox="0 0 14 14" fill="none" stroke="white" strokeWidth="1.100">
          <path d="M1 13.500A12 12 0 0 1 13 1.500M4 13.500A9 9 0 0 1 13 4.500M7 13.500A6 6 0 0 1 13 7.500" /><circle cx="11" cy="11.500" r="1.800" fill="white" stroke="none" />
        </svg>
        <svg className="ml-[7px]" width="17" height="14" viewBox="0 0 17 14" fill="none" stroke="white" strokeWidth="1.100">
          <path d="M0.500 4.500H3L6.500 1.500V12.500L3 9.500H0.500ZM9 4.500Q10.500 7 9 9.500M11.500 3Q14 7 11.500 11M14 1.500Q17.500 7 14 12.500" />
        </svg>
        <span className="ml-3 w-[35px] text-[11px]">ESP</span>
        <span className="w-11 text-[11px]">17:37</span>
        <button aria-label="Notificaciones" className="mr-[19px]">
          <svg width="17" height="17" viewBox="0 0 17 17" fill="none" stroke="white" strokeWidth="1.200"><path d="M0.800 1H16.200V13H11L8.500 15.500L6 13H0.800Z" /></svg>
        </button>
        <span className="mr-1 h-full w-px bg-[#5c5f60]" />
      </div>
    </footer>
  );
}

export default function App() {
  return (
    <div className="relative flex h-screen flex-col overflow-hidden font-['Open_Sans',sans-serif]">
      <TitleBar />
      <FormulaBar />
      <Sheet />
      <SheetTabs />
      <StatusBar />
      <TaskBar />
      {/* Watermark */}
      <svg className="pointer-events-none absolute right-0 bottom-0" width="260" height="86" opacity="0.14">
        <path d="M29 33L54 12L76 32L53 56" fill="none" stroke="#98ca3f" strokeWidth="13" />
        <text x="92" y="59" fontSize="60" fontWeight="600" fontFamily="'Open Sans', sans-serif" fill="#999">Platzi</text>
      </svg>
    </div>
  );
}
